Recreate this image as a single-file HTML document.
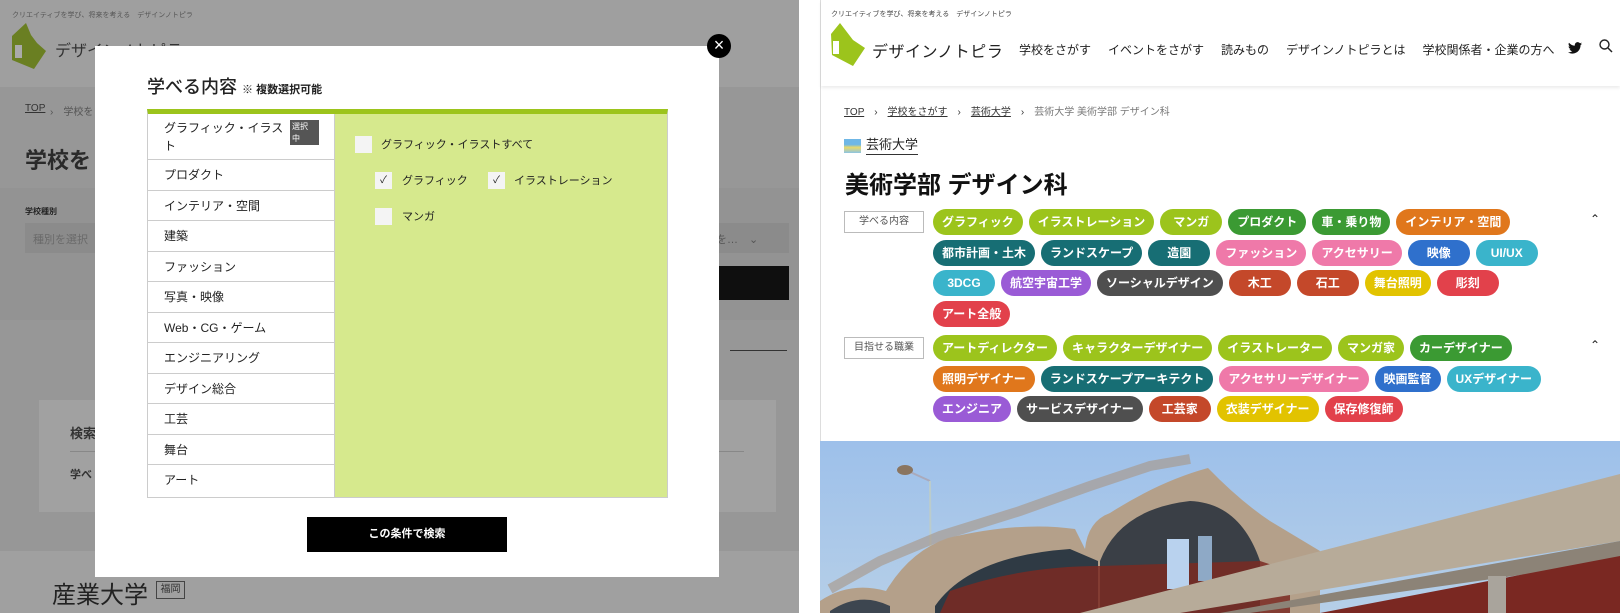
<!DOCTYPE html>
<html><head><meta charset="utf-8">
<style>
*{margin:0;padding:0;box-sizing:border-box}
body{width:1620px;height:613px;overflow:hidden;background:#fff;font-family:"Liberation Sans","Noto Sans CJK JP",sans-serif;position:relative;color:#222}
.abs{position:absolute}
.left{left:0;top:0;width:799px;height:613px;background:#979797;overflow:hidden}
.tag{display:inline-block;height:26px;line-height:26px;border-radius:13px;color:#fff;font-weight:bold;font-size:12px;padding:0 9px;min-width:62px;text-align:center;margin:0 6px 4.5px 0;white-space:nowrap;letter-spacing:0}
.g{background:#9cc41c}.dg{background:#3b9a33}.o{background:#e0771c}.t{background:#176e74}.p{background:#ef79a9}.b{background:#2f70cc}.lb{background:#3ab4cb}.pu{background:#9a5bd6}.gr{background:#4f4f4f}.br{background:#c4482a}.y{background:#e2c300}.r{background:#e2414b}
.lbl{position:absolute;left:844px;width:80px;height:22px;border:1px solid #bbb;font-size:10px;color:#555;text-align:center;line-height:20px}
.row{border-bottom:1px solid #ccc;height:30.5px;line-height:30px;padding-left:16px;font-size:12px;color:#222}
.cb{position:absolute;width:17px;height:17px;background:#f4f4f4}
</style></head><body>

<div class="abs left">
  <div class="abs" style="left:0;top:0;width:799px;height:87px;background:#9f9f9f"></div>
  <div class="abs" style="left:12px;top:10px;font-size:7px;color:#555">クリエイティブを学び、将来を考える　デザインノトピラ</div>
  <svg class="abs" style="left:12px;top:23px" width="36" height="46" viewBox="0 0 36 46"><polygon points="14,0 0,13 0,37 22,46 34,28 25,20 19,12" fill="#6a7f22"/><rect x="3" y="22" width="7" height="13" fill="#aaa"/></svg>
  <div class="abs" style="left:55px;top:37px;font-size:16px;color:#333">デザインノトピラ</div>
  <div class="abs" style="left:0;top:188px;width:799px;height:132px;background:#939393"></div>
  <div class="abs" style="left:25px;top:103px;font-size:10px;color:#333;text-decoration:underline">TOP</div>
  <div class="abs" style="left:50px;top:103px;font-size:10px;color:#555">›　学校をさ</div>
  <div class="abs" style="left:25px;top:143px;font-size:22px;font-weight:bold;color:#2a2a2a">学校を</div>
  <div class="abs" style="left:25px;top:206px;font-size:8px;color:#222;font-weight:bold">学校種別</div>
  <div class="abs" style="left:25px;top:223px;width:764px;height:30px;background:#8b8b8b"></div>
  <div class="abs" style="left:33px;top:231px;font-size:11px;color:#6a6a6a">種別を選択</div>
  <div class="abs" style="left:705px;top:231px;font-size:11px;color:#555">業を…　⌄</div>
  <div class="abs" style="left:719px;top:266px;width:70px;height:34px;background:#0f0f0f"></div>
  <div class="abs" style="left:730px;top:350px;width:57px;height:1px;background:#333"></div>
  <div class="abs" style="left:39px;top:400px;width:737px;height:112px;background:#a1a1a1"></div>
  <div class="abs" style="left:70px;top:423px;font-size:13px;font-weight:bold;color:#333">検索</div>
  <div class="abs" style="left:70px;top:451px;width:674px;height:1px;background:#888"></div>
  <div class="abs" style="left:70px;top:466px;font-size:11px;font-weight:bold;color:#333">学べ</div>
  <div class="abs" style="left:0;top:551px;width:799px;height:62px;background:#a0a0a0"></div>
  <div class="abs" style="left:52px;top:575px;font-size:24px;color:#222">産業大学</div>
  <div class="abs" style="left:156px;top:581px;width:29px;height:18px;border:1px solid #444;font-size:10px;text-align:center;line-height:16px;color:#333">福岡</div>

  <div class="abs" style="left:95px;top:46px;width:624px;height:531px;background:#fff">
    <div class="abs" style="left:52px;top:27px;font-size:18px;color:#222;font-weight:500">学べる内容 <span style="font-size:11px;font-weight:bold">※ 複数選択可能</span></div>
    <div class="abs" style="left:52px;top:63px;width:521px;height:389px;border:1px solid #ccc;border-top:5px solid #9cc41c;background:#d6e98d">
      <div class="abs" style="left:0;top:0;width:187px;height:383px;background:#fff;border-right:1px solid #ccc">
        <div class="row" style="height:46px;line-height:18px;padding-top:5px;position:relative">グラフィック・イラス<br>ト<span style="position:absolute;left:142px;top:6px;width:29px;height:25px;background:#555;color:#fff;font-size:8px;line-height:12px;padding:1px 2px">選択<br>中</span></div>
        <div class="row">プロダクト</div>
        <div class="row">インテリア・空間</div>
        <div class="row">建築</div>
        <div class="row">ファッション</div>
        <div class="row">写真・映像</div>
        <div class="row">Web・CG・ゲーム</div>
        <div class="row">エンジニアリング</div>
        <div class="row">デザイン総合</div>
        <div class="row">工芸</div>
        <div class="row">舞台</div>
        <div class="row" style="border:none">アート</div>
      </div>
      <div class="cb" style="left:207px;top:22px"></div>
      <div class="abs" style="left:233px;top:22px;font-size:11px">グラフィック・イラストすべて</div>
      <div class="cb" style="left:227px;top:58px;font-size:10px;text-align:center;line-height:17px">✓</div>
      <div class="abs" style="left:254px;top:58px;font-size:11px">グラフィック</div>
      <div class="cb" style="left:340px;top:58px;font-size:10px;text-align:center;line-height:17px">✓</div>
      <div class="abs" style="left:366px;top:58px;font-size:11px">イラストレーション</div>
      <div class="cb" style="left:227px;top:94px"></div>
      <div class="abs" style="left:254px;top:94px;font-size:11px">マンガ</div>
    </div>
    <div class="abs" style="left:212px;top:471px;width:200px;height:35px;background:#000;color:#fff;font-size:11px;font-weight:bold;text-align:center;line-height:35px">この条件で検索</div>
  </div>
  <div class="abs" style="left:707px;top:34px;width:24px;height:24px;border-radius:50%;background:#000;color:#fff;text-align:center;line-height:23px;font-size:18px">×</div>
</div>

<div class="abs" style="left:820px;top:0;width:1px;height:613px;background:#ddd"></div>
<div class="abs" style="left:821px;top:0;width:799px;height:86px;background:#fff;box-shadow:0 2px 3px rgba(0,0,0,.08)"></div>
<div class="abs" style="left:831px;top:9px;font-size:7px;color:#444">クリエイティブを学び、将来を考える　デザインノトピラ</div>
<svg class="abs" style="left:831px;top:23px" width="36" height="44" viewBox="0 0 36 44"><polygon points="9,0 0,11 1,32 22,43 34,25 22,17" fill="#9cc41c"/><rect x="2" y="18" width="6" height="13" fill="#fff"/></svg>
<div class="abs" style="left:872px;top:38px;font-size:16px;color:#222;letter-spacing:.5px">デザインノトピラ</div>
<div class="abs" style="left:1019px;top:41px;font-size:12px;color:#222;white-space:nowrap">学校をさがす<span style="margin-left:17px">イベントをさがす</span><span style="margin-left:17px">読みもの</span><span style="margin-left:17px">デザインノトピラとは</span><span style="margin-left:17px">学校関係者・企業の方へ</span></div>
<svg class="abs" style="left:1568px;top:42px" width="14" height="12" viewBox="0 0 24 20"><path d="M24 2.4c-.9.4-1.8.7-2.8.8 1-.6 1.8-1.6 2.2-2.7-1 .6-2 1-3.1 1.2C19.3.7 18 0 16.6 0c-2.7 0-4.9 2.2-4.9 4.9 0 .4 0 .8.1 1.1C7.7 5.8 4.1 3.9 1.7.9c-.4.7-.7 1.600-.7 2.5 0 1.7.9 3.2 2.200 4.1-.8 0-1.600-.2-2.200-.6v.1c0 2.4 1.700 4.4 3.900 4.8-.4.1-.8.2-1.300.2-.3 0-.6 0-.9-.1.6 2 2.400 3.4 4.600 3.4-1.700 1.300-3.800 2.100-6.100 2.100-.4 0-.8 0-1.200-.1C2.2 18.8 4.8 19.6 7.5 19.6c9.1 0 14-7.5 14-14v-.6c1-.7 1.8-1.600 2.5-2.600z" fill="#111"/></svg>
<svg class="abs" style="left:1599px;top:39px" width="14" height="14" viewBox="0 0 14 14"><circle cx="5.5" cy="5.5" r="4.5" fill="none" stroke="#222" stroke-width="1.4"/><line x1="9" y1="9" x2="13" y2="13" stroke="#222" stroke-width="1.5"/></svg>

<div class="abs" style="left:844px;top:103px;font-size:10px;color:#333;white-space:nowrap"><u>TOP</u>　›　<u>学校をさがす</u>　›　<u>芸術大学</u>　›　<span style="color:#777">芸術大学 美術学部 デザイン科</span></div>
<div class="abs" style="left:844px;top:139px;width:17px;height:14px;background:linear-gradient(#6fb7e6 40%,#e9d96a 60%,#8cc4e4)"></div>
<div class="abs" style="left:866px;top:136px;font-size:13px;color:#222;border-bottom:1px solid #333;line-height:18px">芸術大学</div>
<div class="abs" style="left:845px;top:165px;font-size:24px;font-weight:bold;color:#111">美術学部 デザイン科</div>

<div class="lbl" style="top:211px">学べる内容</div>
<div class="abs" style="left:1590px;top:212px;font-size:12px">⌃</div>
<div class="abs" style="left:933px;top:209px;width:640px">
<span class="tag g">グラフィック</span><span class="tag g">イラストレーション</span><span class="tag g">マンガ</span><span class="tag dg">プロダクト</span><span class="tag dg">車・乗り物</span><span class="tag o">インテリア・空間</span><span class="tag t">都市計画・土木</span><span class="tag t">ランドスケープ</span><span class="tag t">造園</span><span class="tag p">ファッション</span><span class="tag p">アクセサリー</span><span class="tag b">映像</span><span class="tag lb">UI/UX</span><span class="tag lb">3DCG</span><span class="tag pu">航空宇宙工学</span><span class="tag gr">ソーシャルデザイン</span><span class="tag br">木工</span><span class="tag br">石工</span><span class="tag y">舞台照明</span><span class="tag r">彫刻</span><span class="tag r">アート全般</span>
</div>
<div class="lbl" style="top:337px">目指せる職業</div>
<div class="abs" style="left:1590px;top:338px;font-size:12px">⌃</div>
<div class="abs" style="left:933px;top:335px;width:640px">
<span class="tag g">アートディレクター</span><span class="tag g">キャラクターデザイナー</span><span class="tag g">イラストレーター</span><span class="tag g">マンガ家</span><span class="tag dg">カーデザイナー</span><span class="tag o">照明デザイナー</span><span class="tag t">ランドスケープアーキテクト</span><span class="tag p">アクセサリーデザイナー</span><span class="tag b">映画監督</span><span class="tag lb">UXデザイナー</span><span class="tag pu">エンジニア</span><span class="tag gr">サービスデザイナー</span><span class="tag br">工芸家</span><span class="tag y">衣装デザイナー</span><span class="tag r">保存修復師</span>
</div>

<svg class="abs" style="left:820px;top:441px" width="800" height="172" viewBox="0 0 800 172">
<defs><linearGradient id="sky" x1="0" y1="0" x2="0" y2="1"><stop offset="0" stop-color="#9dc0ea"/><stop offset="1" stop-color="#b6cfe8"/></linearGradient></defs>
<rect width="800" height="172" fill="url(#sky)"/>
<line x1="88" y1="30" x2="110" y2="40" stroke="#aab" stroke-width="2"/>
<line x1="110" y1="40" x2="111" y2="172" stroke="#bcc" stroke-width="2"/>
<ellipse cx="85" cy="29" rx="8" ry="5" fill="#8a7560"/>
<path d="M10 148 L60 120 L120 95 L200 70 L270 45 L330 25 L370 18" fill="none" stroke="#a89582" stroke-width="10" opacity=".6"/>
<path d="M0 160 Q30 140 66 150 Q90 110 128 97 Q200 80 255 88 L265 108 Q268 80 290 72 Q340 40 388 27 Q420 60 450 80 L500 110 L500 172 L0 172 Z" fill="#b4a08a"/>
<path d="M10 170 Q40 150 70 165 L70 172 L10 172Z" fill="#3d4650"/>
<path d="M115 165 Q150 115 250 108 L278 120 L278 172 L115 172 Z" fill="#2f3a44"/>
<path d="M280 120 Q300 68 370 60 Q420 62 440 120 L440 172 L280 172 Z" fill="#3a3f46"/>
<path d="M120 172 L130 150 Q200 125 280 125 L440 120 L470 130 L470 172 Z" fill="#7a2a22" opacity=".85"/>
<rect x="347" y="98" width="22" height="50" fill="#b9d2ee"/>
<rect x="378" y="95" width="14" height="45" fill="#8ea9c6"/>
<path d="M260 172 L800 33 L800 100 L360 172 Z" fill="#b7ab99"/>
<path d="M400 172 L800 100 L800 120 L430 172Z" fill="#8c8377"/>
<path d="M500 172 L800 115 L800 172 Z" fill="#7a2822"/>
<rect x="668" y="135" width="18" height="37" fill="#a9a49c"/>
</svg>
</body></html>
